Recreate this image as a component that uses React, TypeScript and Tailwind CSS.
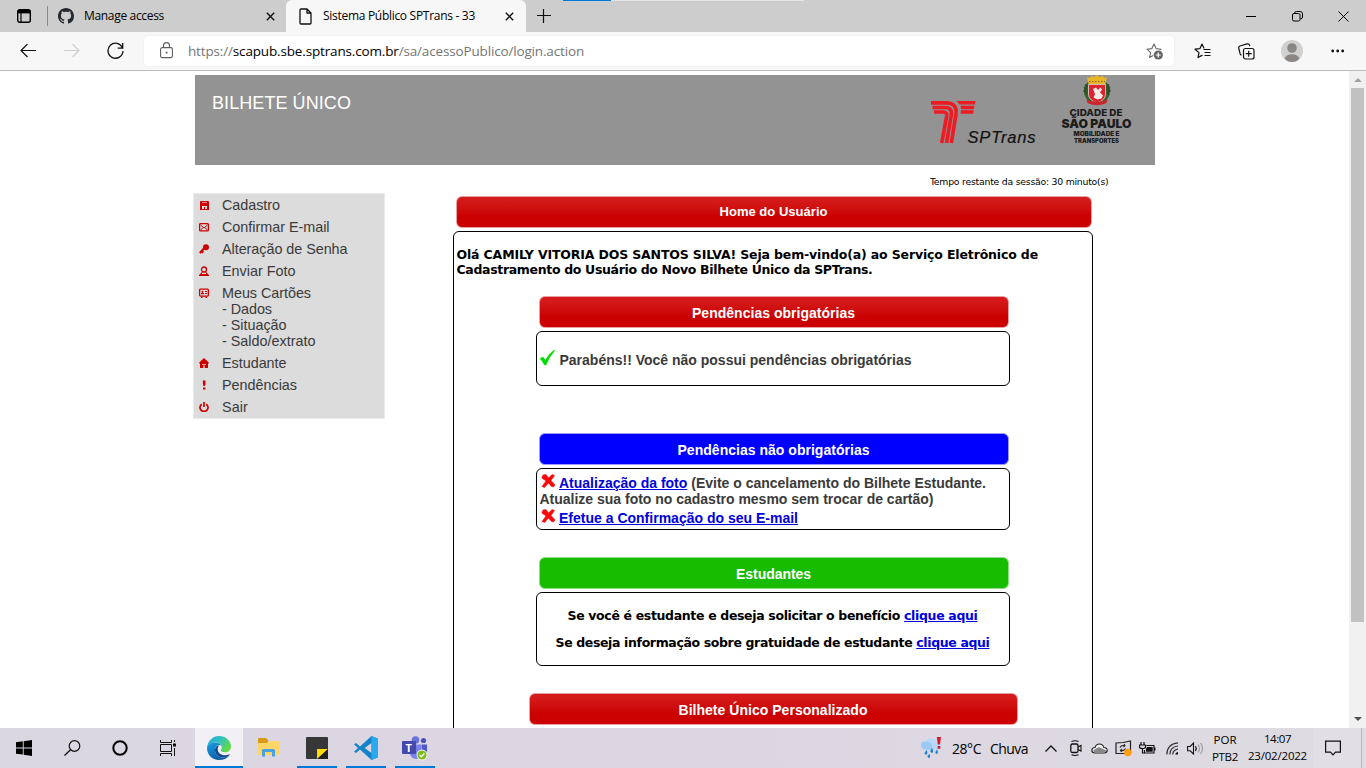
import { useLayoutEffect, useRef, useState } from "react";
import type { ReactNode } from "react";

const segoe = "font-['Open_Sans','Noto_Sans',sans-serif]";
const arial = "font-['Liberation_Sans',Arial,sans-serif]";
const verdana = "font-['DejaVu_Sans',Verdana,sans-serif]";

/* Inline text whose letter spacing is tuned so that it spans `w` pixels. */
function Fit({ w, className = "", children }: { w: number; className?: string; children: ReactNode }) {
  const ref = useRef<HTMLSpanElement>(null);
  const [ls, setLs] = useState(0);
  useLayoutEffect(() => {
    const el = ref.current;
    if (!el) return;
    const n = (el.textContent || "").length;
    setLs((w - el.getBoundingClientRect().width) / n);
  }, [w]);
  return (
    <span ref={ref} className={"inline-block whitespace-nowrap " + className} style={{ letterSpacing: ls + "px" }}>
      {children}
    </span>
  );
}

function Svg({ w, h, box, className = "", children }: { w: number; h: number; box?: string; className?: string; children: ReactNode }) {
  return (
    <svg width={w} height={h} viewBox={box || `0 0 ${w} ${h}`} fill="none" className={"block shrink-0 " + className}>
      {children}
    </svg>
  );
}

const GITHUB =
  "M8 0C3.58 0 0 3.58 0 8c0 3.54 2.29 6.53 5.47 7.59.4.07.55-.17.55-.38 0-.19-.01-.82-.01-1.49-2.01.37-2.53-.49-2.69-.94-.09-.23-.48-.94-.82-1.13-.28-.15-.68-.52-.01-.53.63-.01 1.08.58 1.23.82.72 1.21 1.87.87 2.33.66.07-.52.28-.87.51-1.07-1.78-.2-3.64-.89-3.64-3.95 0-.87.31-1.59.82-2.15-.08-.2-.36-1.02.08-2.12 0 0 .67-.21 2.2.82.64-.18 1.32-.27 2-.27s1.36.09 2 .27c1.53-1.04 2.2-.82 2.2-.82.44 1.1.16 1.92.08 2.12.51.56.82 1.27.82 2.15 0 3.07-1.87 3.75-3.65 3.95.29.25.54.73.54 1.48 0 1.07-.01 1.93-.01 2.2 0 .21.15.46.55.38A8.01 8.01 0 0 0 16 8c0-4.42-3.58-8-8-8Z";

const CloseX = ({ className = "" }: { className?: string }) => (
  <Svg w={9} h={9} className={className}>
    <path d="M.8 .8l7.4 7.4M8.2 .8L.8 8.2" stroke="#111" strokeWidth="1.4" />
  </Svg>
);

function TabBar() {
  return (
    <div className={"flex h-8 shrink-0 items-center bg-[#cdcdcd] text-black " + segoe}>
      <Svg w={14} h={14} className="ml-[17px]">
        <rect x=".7" y=".7" width="12.6" height="12.6" rx="2" stroke="#000" strokeWidth="1.4" />
        <path d="M1 1h12v3.4H1z" fill="#000" />
        <path d="M4 4v9" stroke="#000" strokeWidth="1.2" />
      </Svg>
      <div className="ml-4 h-5 w-px bg-[#8a8a8a]" />
      <Svg w={16} h={16} className="ml-[10px]">
        <path d={GITHUB} fill="#24292f" />
      </Svg>
      <Fit w={80} className="ml-[10px] text-[12px]">Manage access</Fit>
      <CloseX className="ml-[102px]" />
      <div className="ml-[11px] flex h-8 w-[240px] items-center rounded-t-[6px] bg-[#f7f7f7]">
        <Svg w={13} h={17} className="ml-[13px]">
          <path d="M1 2q0-1 1-1h6l4 4v10q0 1-1 1H2q-1 0-1-1zM8 1v4h4" stroke="#111" strokeWidth="1.3" strokeLinejoin="round" />
        </Svg>
        <Fit w={152} className="ml-[11px] text-[12px]">Sistema Público SPTrans - 33</Fit>
        <CloseX className="ml-[30px]" />
      </div>
      <Svg w={14} h={14} className="ml-[11px]">
        <path d="M6.500 0v14M0 6.500h14" stroke="#111" strokeWidth="1.2" />
      </Svg>
      <div className="ml-[12px] flex h-px self-start">
        <div className="h-px w-12 bg-[#0078d7]" />
        <div className="h-px w-[193px] bg-[#e4e4e4]" />
      </div>
      <Svg w={10} h={10} className="ml-[442px]">
        <path d="M0 5.5h10" stroke="#000" />
      </Svg>
      <Svg w={11} h={11} className="ml-[36px]">
        <rect x=".5" y="2.5" width="7.5" height="7.5" rx="1.5" stroke="#000" />
        <path d="M2.5 2.3Q2.7.5 4.5.5h3.7q2.3 0 2.3 2.3v3.2q0 1.800-2 2" stroke="#000" />
      </Svg>
      <Svg w={11} h={11} className="ml-[35px]">
        <path d="M.5 .5l10 10M10.500 .5l-10 10" stroke="#000" />
      </Svg>
    </div>
  );
}

const STAR = "M8 1l2.1 4.6 5 .6-3.7 3.4 1 4.9L8 12.100l-4.400 2.400 1-4.900L.9 6.200l5-.6z";

function Toolbar() {
  return (
    <div className="flex h-[39px] shrink-0 items-center border-b border-[#bcbcbc] bg-[#f7f7f7]">
      <Svg w={16} h={14} className="ml-5">
        <path d="M16 6.500H1M7.500 0L1 6.500 7.500 13" stroke="#111" strokeWidth="1.200" />
      </Svg>
      <Svg w={16} h={14} className="ml-7">
        <path d="M0 6.500h15M8.500 0L15 6.500 8.500 13" stroke="#cfcfcf" strokeWidth="1.200" />
      </Svg>
      <Svg w={17} h={18} className="ml-[27px]">
        <path d="M15.500 6A7.500 7.500 0 1 0 16 9M15.700 1v5.200h-5" stroke="#111" strokeWidth="1.300" />
      </Svg>
      <div className={"ml-5 flex h-[30px] w-[1030px] items-center rounded-[4px] bg-white shadow-[0_0_2px_#e4e4e4] " + segoe}>
        <Svg w={13} h={17} className="ml-4 mb-px">
          <rect x=".6" y="5.600" width="11.800" height="10" rx="1.500" stroke="#5f5f5f" strokeWidth="1.100" />
          <path d="M3.500 5.500V3.500q0-2.900 3-2.900t3 2.900v2" stroke="#5f5f5f" strokeWidth="1.100" />
          <rect x="5.700" y="9.700" width="1.800" height="1.800" fill="#5f5f5f" />
        </Svg>
        <Fit w={396} className="ml-[15px] text-[13.500px] text-[#757575]">
          https://<span className="text-black">scapub.sbe.sptrans.com.br</span>/sa/acessoPublico/login.action
        </Fit>
        <Svg w={18} h={17} className="ml-[562px]">
          <path d={STAR} stroke="#6a6a6a" strokeWidth="1.100" strokeLinejoin="round" />
          <circle cx="12.300" cy="12" r="5.200" fill="#fff" />
          <circle cx="12.300" cy="12" r="4.600" fill="#666" />
          <path d="M12.300 9.500v5M9.800 12h5" stroke="#fff" strokeWidth="1.200" />
        </Svg>
      </div>
      <Svg w={17} h={16} className="ml-5">
        <path d="M8.500 12.100L4 14.500l1-4.900L1 6.200l5-.6L8 1l2.100 4.600" stroke="#111" strokeWidth="1.200" strokeLinejoin="round" />
        <path d="M9.500 6.500h7M10.500 9.500h6M10.500 12.500h6" stroke="#111" strokeWidth="1.200" />
      </Svg>
      <Svg w={17} h={17} className="ml-[27px]">
        <path d="M3.500 12.300Q2.600 12 2.200 11L.8 5.500Q.3 3.600 2 3L9 .9q2-.5 2.500 1.300l.3 1" stroke="#111" strokeWidth="1.200" />
        <rect x="5.500" y="5.500" width="10.500" height="10.500" rx="2" stroke="#111" strokeWidth="1.200" />
        <path d="M10.700 7.700v6M7.700 10.700h6" stroke="#111" strokeWidth="1.200" />
      </Svg>
      <Svg w={22} h={22} className="ml-[26px]">
        <circle cx="11" cy="11" r="11" fill="#d2d0ce" />
        <circle cx="11" cy="8" r="4.800" fill="#8a8683" />
        <path d="M3.500 18.500q2-4.300 7.500-4.300t7.500 4.300Q15.500 22 11 22t-7.500-3.500z" fill="#8a8683" />
      </Svg>
      <Svg w={14} h={4} className="ml-[28px]">
        <circle cx="1.700" cy="2" r="1.400" fill="#111" />
        <circle cx="6.700" cy="2" r="1.400" fill="#111" />
        <circle cx="11.700" cy="2" r="1.400" fill="#111" />
      </Svg>
    </div>
  );
}

function SPTransLogo() {
  return (
    <svg width="108" height="48" viewBox="0 0 108 48" className="mt-[24px] block shrink-0">
      <g fill="none" stroke="#ed1c24" strokeWidth="3.700">
        <path d="M2 3.800H17Q28.500 4 27 15L22.300 44" />
        <path d="M3.500 8.500H16Q23.500 8.500 22.300 16L17.500 44" />
        <path d="M5 13H14Q18.300 13 17.700 17L12.700 44" />
      </g>
      <path d="M27.500 2H46.500l-.7 3.600H30.500zM31.500 6.700H45.500l-.6 3.500H32zM32 11.300H44.700l-.6 3.500H31.500z" fill="#ed1c24" />
      <text x="38.500" y="43.500" textLength="68" fontFamily="Liberation Sans" fontSize="16.500" fontStyle="italic" fill="#111" stroke="#111" strokeWidth=".2">
        SPTrans
      </text>
    </svg>
  );
}

function CityLogo() {
  return (
    <svg width="72" height="70" viewBox="0 0 72 70" className="block shrink-0" fontFamily="Inter, sans-serif" fontWeight="900" fill="#1c1c1c">
      <path d="M27 7q-6 5-3.500 13 3 8 12.500 10 9.500-2 12.500-10Q51 12 45 7z" fill="#35612f" />
      <path d="M24 9.500l2 2-2.500 1 2 2-2.500 1.500 2.500 1.500-1 2M48 9.500l-2 2 2.500 1-2 2 2.500 1.500-2.500 1.500 1 2" stroke="#274d25" strokeWidth="1.200" fill="none" />
      <path d="M26 2l2.500 1 2-2 2.500 1 3-2 3 2 2.500-1 2 2L46 2l-1.500 7h-17z" fill="#e6b52a" />
      <path d="M28 6.500h16" stroke="#94641a" strokeWidth="1.200" strokeDasharray="1.500 1.500" />
      <path d="M27.500 9.500h17v10q0 5.500-8.500 8.500-8.500-3-8.500-8.500z" fill="#dc2330" stroke="#eedcd8" strokeWidth=".8" />
      <path d="M32 14l3-1.500 2 2.500 2.500-2.500 1.500 2-2 3 3 3-1.500 3-4 1-4-2 1.500-3.500z" fill="#f6ebe8" />
      <path d="M25.500 24.500Q36 29 46.500 24.500l-1 3.500q-9.500 4.500-19 0z" fill="#c9262d" />
      <text x="8.500" y="41" textLength="53" fontSize="9.600" lengthAdjust="spacingAndGlyphs" fontWeight="800">CIDADE DE</text>
      <text x="0.500" y="53" textLength="70" fontSize="11.800" lengthAdjust="spacingAndGlyphs">SÃO PAULO</text>
      <text x="12.500" y="61" textLength="46" fontSize="6" lengthAdjust="spacingAndGlyphs">MOBILIDADE E</text>
      <text x="13" y="67.800" textLength="45" fontSize="6" lengthAdjust="spacingAndGlyphs">TRANSPORTES</text>
    </svg>
  );
}

const red = "#c00";
const menuIcons: Record<string, ReactNode> = {
  disk: (
    <>
      <path d="M1 2q0-1 1-1h7q1 0 1 1v8H1z" fill={red} />
      <path d="M3 2.500h5" stroke="#e68a8a" />
      <path d="M3 6h5v3H6V7H5v2H3z" fill="#e9dcdc" />
    </>
  ),
  mail: (
    <>
      <rect x=".6" y="1.600" width="8.800" height="7.300" rx="1" stroke={red} strokeWidth="1.300" />
      <path d="M1.500 2.800L5 6l3.500-3.200M1.500 8L3.800 6M8.500 8L6.200 6" stroke={red} />
    </>
  ),
  key: (
    <>
      <circle cx="7" cy="3.200" r="3" fill={red} />
      <path d="M5.500 4L.8 9M2.800 7.300l1.500 1.300" stroke={red} strokeWidth="2.200" />
    </>
  ),
  user: (
    <>
      <circle cx="5" cy="3.500" r="2.500" stroke={red} strokeWidth="1.300" />
      <path d="M3.500 6L1.500 8.500h7L6.500 6M0 9.300h10" stroke={red} strokeWidth="1.200" />
    </>
  ),
  card: (
    <>
      <rect x=".6" y="1.100" width="8.800" height="7" rx="1" stroke={red} strokeWidth="1.300" />
      <circle cx="3.500" cy="3.800" r="1.100" fill={red} />
      <path d="M2 5.700h3M6 3.500h2M6 5.500h2M2 9.300h1.500M6.500 9.300H8" stroke={red} strokeWidth="1.200" />
    </>
  ),
  home: (
    <>
      <path d="M5 0l5 4.700-.7 1L9 5.500V10H1V5.500l-.3.200-.7-1z" fill={red} />
      <path d="M3 6h4v.8H3zM4.300 7.500h1.400V10H4.300z" fill="#ecd6d6" />
    </>
  ),
  bang: <path d="M3.900 .5h2.600v3L6 6H4.400l-.5-2.500zM4 7.500h2.400v2H4z" fill={red} />,
  power: (
    <>
      <path d="M2.700 2.200a4 4 0 1 0 4.600 0" stroke={red} strokeWidth="1.700" />
      <path d="M5 0v5" stroke={red} strokeWidth="1.700" />
    </>
  ),
};

function MenuRow({ icon, w, children, sub }: { icon: string; w: number; children: string; sub?: [string, number][] }) {
  return (
    <div className={"flex pl-[5px] " + (sub ? "h-[70px]" : "h-[22px]")}>
      <Svg w={11} h={10} box="0 0 11 10" className="mt-[6px]">
        {menuIcons[icon]}
      </Svg>
      <div className="ml-[12px] flex flex-col items-start pt-[3px] text-[14.400px] leading-4 text-[#3a3a3a]">
        <Fit w={w}>{children}</Fit>
        {sub?.map(([t, sw]) => (
          <Fit key={t} w={sw}>{t}</Fit>
        ))}
      </div>
    </div>
  );
}

function Sidebar() {
  return (
    <div className={"ml-[193px] flex h-[226px] w-[192px] shrink-0 flex-col border border-[#ebebeb] bg-[#dcdcdc] " + arial}>
      <MenuRow icon="disk" w={58}>Cadastro</MenuRow>
      <MenuRow icon="mail" w={107.5}>Confirmar E-mail</MenuRow>
      <MenuRow icon="key" w={125.5}>Alteração de Senha</MenuRow>
      <MenuRow icon="user" w={73.5}>Enviar Foto</MenuRow>
      <MenuRow icon="card" w={89} sub={[["- Dados", 50], ["- Situação", 64.5], ["- Saldo/extrato", 93.5]]}>Meus Cartões</MenuRow>
      <MenuRow icon="home" w={64.5}>Estudante</MenuRow>
      <MenuRow icon="bang" w={75}>Pendências</MenuRow>
      <MenuRow icon="power" w={26}>Sair</MenuRow>
    </div>
  );
}

function Title({ className, w, children }: { className: string; w: number; children: string }) {
  return (
    <div className={"flex h-8 shrink-0 items-center justify-center rounded-[6px] border pr-px font-bold text-white " + arial + " " + className}>
      <Fit w={w}>{children}</Fit>
    </div>
  );
}

const redBar = "border-[#e9a0a0] bg-linear-to-b from-[#d41a1a] from-10% to-[#cb0000] to-65%";

const CrossMark = () => (
  <Svg w={15} h={14} className="mr-[3px]">
    <path d="M2 1l3-.5 2.500 3.500L11 .5l2.500 1-3.500 5 4 4.500-1.500 2-2-.5L7.500 9l-4 4.500-2.500-1L5 7 .8 4z" fill="#f80808" stroke="#f80808" strokeWidth=".6" />
  </Svg>
);

function Main() {
  return (
    <div className="ml-[68px] flex w-[640px] flex-col pt-[3px]">
      <Title w={108} className={"ml-[3px] w-[636px] text-[13px] " + redBar}>Home do Usuário</Title>
      <div className="mt-[3px] flex h-[560px] flex-col rounded-t-[6px] border border-black">
        <div className={"ml-[2.500px] mt-[15px] flex flex-col items-start text-[12.500px] font-bold leading-[15px] text-black " + verdana}>
          <Fit w={581.5}>Olá CAMILY VITORIA DOS SANTOS SILVA! Seja bem-vindo(a) ao Serviço Eletrônico de</Fit>
          <Fit w={416}>Cadastramento do Usuário do Novo Bilhete Único da SPTrans.</Fit>
        </div>

        <Title w={163} className={"ml-[85px] mt-[19px] w-[470px] pt-[2px] text-[14px] " + redBar}>Pendências obrigatórias</Title>
        <div className={"ml-[82px] mt-[3px] flex h-[55px] w-[474px] items-center rounded-[6px] border border-black text-[14px] font-bold text-[#3a3a3a] " + arial}>
          <Svg w={17} h={17} className="mb-[3px] ml-[2px]">
            <path d="M1 9.500l3-1.500 2.500 3.500Q10 4 16 1 10 8 7 16H5.500Q3.500 12 1 9.500z" fill="#00dc00" stroke="#00dc00" strokeWidth=".5" />
          </Svg>
          <Fit w={352} className="ml-[3.500px] pt-[3px]">Parabéns!! Você não possui pendências obrigatórias</Fit>
        </div>

        <Title w={192} className="ml-[85px] mt-[47px] w-[470px] border-[#9a9aff] bg-[#0000ff] pt-[2px] text-[14px]">Pendências não obrigatórias</Title>
        <div className={"ml-[82px] mt-[3px] flex h-[62px] w-[474px] flex-col rounded-[6px] border border-black pl-[2.500px] pt-[5px] text-[14px] font-bold leading-[17px] text-[#3a3a3a] " + arial}>
          <div className="flex h-[17px] pl-px">
            <CrossMark />
            <Fit w={427} className="ml-[.5px] pt-px">
              <span className="text-[#0000e0] underline">Atualização da foto</span> (Evite o cancelamento do Bilhete Estudante.
            </Fit>
          </div>
          <div className="h-[18px]">
            <Fit w={394}>Atualize sua foto no cadastro mesmo sem trocar de cartão)</Fit>
          </div>
          <div className="flex h-[17px] pl-px">
            <CrossMark />
            <Fit w={239} className="ml-[.5px] pt-px text-[#0000e0] underline">Efetue a Confirmação do seu E-mail</Fit>
          </div>
        </div>

        <Title w={75} className="ml-[85px] mt-[27px] w-[470px] border-[#93dd8a] bg-[#17bb00] pt-[2px] text-[14px]">Estudantes</Title>
        <div className={"ml-[82px] mt-[3px] flex h-[74px] w-[474px] flex-col items-center rounded-[6px] border border-black pr-px pt-[14px] text-[12.500px] font-bold leading-[17px] text-black " + verdana}>
          <Fit w={410}>
            Se você é estudante e deseja solicitar o benefício <span className="text-[#0000e0] underline">clique aqui</span>
          </Fit>
          <Fit w={434} className="mt-[10px]">
            Se deseja informação sobre gratuidade de estudante <span className="text-[#0000e0] underline">clique aqui</span>
          </Fit>
        </div>

        <Title w={189} className={"ml-[75px] mt-[27px] w-[489px] pt-[2px] text-[14px] " + redBar}>Bilhete Único Personalizado</Title>
      </div>
    </div>
  );
}

function Page() {
  return (
    <div className="flex h-[657px] shrink-0 bg-white">
      <div className="flex w-[1349px] flex-col overflow-hidden">
        <div className="ml-[195px] mt-1 flex h-[90px] w-[960px] shrink-0 bg-[#939393]">
          <Fit w={139} className={"ml-[17px] mt-[17px] text-[18px] leading-[22px] text-white " + arial}>BILHETE ÚNICO</Fit>
          <div className="ml-[578px] flex">
            <SPTransLogo />
            <div className="ml-[24px]">
              <CityLogo />
            </div>
          </div>
        </div>
        <div className={"ml-[930px] mt-[10px] h-[18px] shrink-0 text-[9.300px] leading-[13px] text-black " + verdana}>
          <Fit w={178.5}>Tempo restante da sessão: 30 minuto(s)</Fit>
        </div>
        <div className="flex items-start">
          <Sidebar />
          <Main />
        </div>
      </div>
      <div className="flex w-[17px] flex-col items-center bg-[#f1f1f1] pt-[7px]">
        <Svg w={8} h={4}>
          <path d="M4 0l4 4H0z" fill="#a3a3a3" />
        </Svg>
        <div className="mt-[6px] h-[534px] w-[13px] bg-[#c1c1c1]" />
        <Svg w={8} h={4} className="mt-[95px]">
          <path d="M0 0h8L4 4z" fill="#505050" />
        </Svg>
      </div>
    </div>
  );
}

function AppSlot({ active, line, className, children }: { active?: boolean; line?: boolean; className: string; children: ReactNode }) {
  return (
    <div className={"flex h-10 flex-col items-center " + (active ? "bg-[#f2f0f5] " : "") + className}>
      <div className="flex h-[38px] items-center pt-[2px]">{children}</div>
      <div className={"h-[2px] self-stretch " + (line ? "bg-[#0078d7]" : "")} />
    </div>
  );
}

function Taskbar() {
  return (
    <div className={"flex h-10 shrink-0 items-center bg-linear-to-r from-[#dad6e2] via-[#dcd6e2] to-[#dedbe2] text-black " + segoe}>
      <Svg w={16} h={16} className="ml-4">
        <path d="M0 2.300l6.800-1v6.200H0zM7.700 1.200L16 0v7.500H7.700zM0 8.400h6.800v6.200L0 13.700zM7.700 8.400H16V16l-8.300-1.200z" fill="#000" />
      </Svg>
      <Svg w={17} h={16} className="ml-[32px]">
        <circle cx="10.500" cy="6" r="5.300" stroke="#111" strokeWidth="1.200" />
        <path d="M6.500 9.800L.5 15.500" stroke="#111" strokeWidth="1.300" />
      </Svg>
      <Svg w={16} h={16} className="ml-[31px]">
        <circle cx="8" cy="8" r="6.700" stroke="#000" strokeWidth="2" />
      </Svg>
      <Svg w={17} h={16} className="ml-[32px]">
        <path d="M.5 0v2.500h11V0M.5 16v-2.500h11V16M.5 4.500h11v7H.5z" stroke="#111" />
        <path d="M14.500 0v2M14.500 8v8" stroke="#111" />
        <path d="M13 3.500h3v3h-3z" fill="#111" />
      </Svg>
      <AppSlot active line className="ml-[18px] w-12">
        <Svg w={24} h={24} box="0 0 24 24">
          <defs>
            <linearGradient id="eg" x1="0" y1="0" x2="1" y2=".5">
              <stop offset="0" stopColor="#2aa5d9" />
              <stop offset=".5" stopColor="#2fc0c4" />
              <stop offset="1" stopColor="#62d94b" />
            </linearGradient>
            <linearGradient id="eb" x1="0" y1="0" x2=".6" y2="1">
              <stop offset="0" stopColor="#1b9de0" />
              <stop offset="1" stopColor="#0c59a4" />
            </linearGradient>
          </defs>
          <path d="M0 11.500C1 4.500 6 0 12 0c7 0 12 5 12 10.500 0 3.500-2.700 5.800-6 5.800-2.800 0-4.300-1-4.300-2 0-.6 1.100-1.200 1.100-3C14.800 9 12 6.500 8.500 6.500 4.500 6.500 1 8.500 0 11.500z" fill="url(#eg)" />
          <path d="M0 12C.3 8.500 4 6.500 8.500 6.500c2.500 0 5 1.300 6 3.300-1-.8-2.300-1-3.500-.6-2.300.8-3.300 3-3 5.500.4 4 4 6.800 8 6.800 2.500 0 4.500-.8 6.200-2C20 22.500 16.500 24 12 24 5 24 0 18.500 0 12z" fill="url(#eb)" />
          <path d="M8 14.700c.4 4 4 6.800 8 6.800 2.500 0 4.500-.8 6.200-2q.8-.7.200-1.200-1.900 1-4.400 1c-4 0-7.300-2.300-7.300-6 0-1.700.7-3 1.700-4-3 .2-4.700 2.800-4.400 5.400z" fill="#134a8e" />
        </Svg>
      </AppSlot>
      <AppSlot className="ml-[5px] w-10">
        <Svg w={21} h={19} className="mb-px">
          <path d="M0 1q0-1 1-1h7l2 2v3H0z" fill="#d99a14" />
          <path d="M0 5h9l2-2h9q1 0 1 1v13H0z" fill="#fdd667" />
          <path d="M4 18.500v-6q0-1.500 1.500-1.500h10q1.500 0 1.500 1.500v6h-3V14H7v4.500z" fill="#4a9fe0" />
        </Svg>
      </AppSlot>
      <AppSlot line className="ml-[9px] w-10">
        <Svg w={22} h={22}>
          <rect width="22" height="22" rx="1" fill="#373737" />
          <path d="M11 22V12h11z" fill="#fddc00" />
          <path d="M11.500 22L22 12v10z" fill="#222" />
        </Svg>
      </AppSlot>
      <AppSlot line className="ml-[9px] w-10">
        <Svg w={24} h={24}>
          <path d="M17.500 0L24 2.800v18.400L17.500 24 6 13.500 2 17l-2-1.200L4 12 0 8.200 2 7l4 3.500zM17.500 7l-6.800 5 6.800 5z" fill="#1583c7" fillRule="evenodd" />
          <path d="M17.500 0L24 2.800v18.400L17.500 24z" fill="#29a9ee" />
        </Svg>
      </AppSlot>
      <AppSlot line className="ml-[9px] w-10">
        <Svg w={26} h={25}>
          <circle cx="13.500" cy="4" r="3.800" fill="#6a73dc" />
          <circle cx="21.500" cy="4.500" r="2.600" fill="#4a52b8" />
          <path d="M9 8.500h10v9q0 5-5 5.500-5-.5-6-5z" fill="#7b83eb" />
          <path d="M19.500 8.500H25v7q0 3.500-3.500 3.500-2 0-2-1z" fill="#5059c9" />
          <rect y="5" width="14" height="13" rx="1" fill="#4449ad" />
          <text x="3.500" y="15.500" fontSize="11" fontWeight="700" fontFamily="Open Sans" fill="#fff">T</text>
          <circle cx="20" cy="19" r="5.400" fill="#fff" />
          <circle cx="20" cy="19" r="4.600" fill="#7fba1a" />
          <path d="M17.700 19l1.700 1.800 3-3.300" stroke="#fff" strokeWidth="1.300" />
        </Svg>
      </AppSlot>
      <Svg w={22} h={22} className="ml-[486px]">
        <path d="M5 12.500Q0 12.500 0 8.500t4-4Q6 1 10.500 1.500 15 2 15.500 5.500 20 6 20 9.500t-4 3z" fill="#b7d9f7" />
        <path d="M5 12.500Q0 12.500 0 8.500t4.500-4Q10 4.500 11 8.500t-1 4z" fill="#9ccaf4" />
        <path d="M5.500 13q1.800 3.500 0 4.500-2.500.5-1.800-1.800zM11 11q2.300 3.500 0 5-2.300-.5-1.500-2.700zM16 12.500q1.800 3.500 0 4.500-2.100 0-1.600-2zM8.500 17q1.500 3.500-.5 4-2-.5-1.500-2.200z" fill="#1f83d8" />
        <path d="M15.800 0H20l-1 7.500h-2.200zM16.600 9h2.700v2.700h-2.700z" fill="#d91a2a" />
      </Svg>
      <Fit w={29} className="ml-[9px] text-[14px]">28°C</Fit>
      <Fit w={38} className="ml-[9px] text-[14px]">Chuva</Fit>
      <Svg w={12} h={7} className="ml-[17px]">
        <path d="M.5 6.500L6 1l5.500 5.500" stroke="#111" strokeWidth="1.300" />
      </Svg>
      <Svg w={12} h={16} className="ml-[13px]">
        <rect x=".8" y="4" width="7.200" height="8.500" rx="1.500" stroke="#111" strokeWidth="1.300" />
        <path d="M8 7l3-1.500v5.500L8 9.500M1.500 1.500Q5 0 8.500 1.500M1.500 14.700q3.500 1.500 7 0" stroke="#111" strokeWidth="1.100" />
      </Svg>
      <Svg w={17} h={11} className="ml-[9px]">
        <path d="M4 10Q.8 10 .8 7.300T4 4.500Q5 1 8.500 1t4.300 3.500q3.400.2 3.400 2.800T13 10z" fill="#f2f2f2" stroke="#222" strokeWidth="1.100" />
        <path d="M3 9Q1.500 7.500 3.500 6.500L8 4l7.200 3.500Q15 9.500 13 9.500H4z" fill="#888" />
      </Svg>
      <Svg w={17} h={17} className="ml-[7px]">
        <path d="M1 3l7-.5L15.500 1v12.500H1z" stroke="#222" strokeWidth="1.200" />
        <path d="M5 7.500q1-2.300 4-2M9 4l1 1.700-1.500 1.500M10.500 8.500q-1 2.500-4 2M6.500 12l-1-1.700L7 9" stroke="#222" strokeWidth="1.100" />
        <circle cx="12.800" cy="12.500" r="3.700" fill="#ff9d0a" />
      </Svg>
      <Svg w={17} h={13} className="ml-[7px]">
        <path d="M2 0v3M5 0v3M.5 3h6v2q0 1.500-3 1.500T.5 5zM3.500 6v5h2" stroke="#111" strokeWidth="1.200" />
        <path d="M7.500 3.500H15v7.500H5.500V8" stroke="#111" strokeWidth="1.100" />
        <path d="M8 5h5.700v4.700H7V7z" fill="#111" />
        <path d="M15 5.500h1.500v3H15z" fill="#111" />
      </Svg>
      <Svg w={13} h={13} className="ml-[10px]">
        <path d="M.8 12.500Q1 2 12 .8M3.800 12.500Q4 5 12 4M6.700 12.500Q7 8 12 7.200" stroke="#333" strokeWidth="1.200" />
        <path d="M9.300 12.500q.2-2 2.700-2.400v2.400z" fill="#111" />
      </Svg>
      <Svg w={17} h={13} className="ml-[8px]">
        <path d="M.6 4.500h2.600L6.500 1v11L3.200 8.800H.6z" stroke="#111" strokeWidth="1.100" />
        <path d="M8.500 4q1.500 2.500 0 5" stroke="#111" strokeWidth="1.100" />
        <path d="M11 2.500q3 4 0 8M13.500 1q4 5.500 0 11" stroke="#999" strokeWidth="1.100" />
      </Svg>
      <div className="ml-[8px] flex w-[26px] flex-col items-center pb-px text-[11.500px] leading-[17px]">
        <Fit w={23}>POR</Fit>
        <Fit w={26}>PTB2</Fit>
      </div>
      <div className="ml-[10px] flex w-[59px] flex-col items-center pb-[2px] text-[11.500px] leading-[17px]">
        <Fit w={27}>14:07</Fit>
        <Fit w={59}>23/02/2022</Fit>
      </div>
      <div className="ml-[6px] flex h-10 w-[49px] items-center justify-center border-r border-[#b4b1b8] bg-[#e1dee4]">
        <Svg w={16} h={16} className="mr-[8px]">
          <path d="M.6 1.200h14.800v11h-4.900L8 14.800l-2.500-2.600H.6z" stroke="#111" strokeWidth="1.200" />
        </Svg>
      </div>
    </div>
  );
}

export default function App() {
  return (
    <div className="flex h-[768px] w-[1366px] flex-col overflow-hidden">
      <TabBar />
      <Toolbar />
      <Page />
      <Taskbar />
    </div>
  );
}
